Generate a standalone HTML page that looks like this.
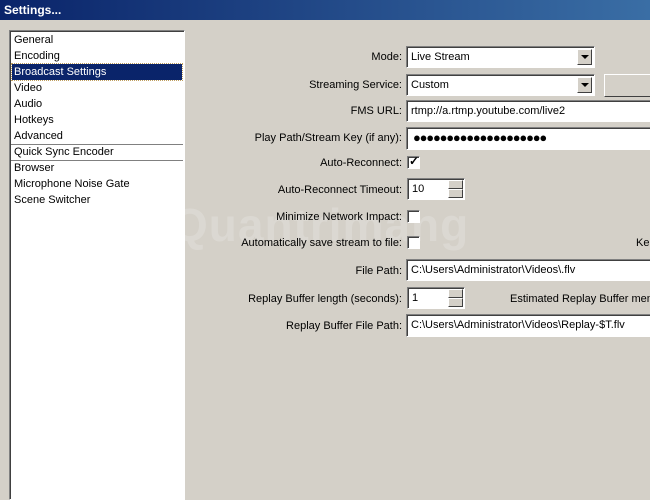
<!DOCTYPE html><html><head><style>
body{margin:0;width:650px;height:500px;background:#d4d0c8;font:11px "Liberation Sans",sans-serif;position:relative;overflow:hidden;color:#000}
.a{position:absolute}
.t{left:0;top:0;width:650px;height:20px;background:linear-gradient(90deg,#0a246a,#3a6ea5);color:#fff;font-weight:bold;font-size:12px;line-height:20px;padding-left:4px;box-sizing:border-box}
.list{left:9px;top:30px;width:176px;height:470px;background:#fff;border:1px solid;border-color:#808080 #fff #fff #808080;box-shadow:inset 1px 1px 0 #404040;box-sizing:border-box}
.it{position:absolute;left:4px;height:16px;line-height:16px;white-space:nowrap}
.sel{left:2px;width:170px;background:#0a246a;color:#fff;padding-left:2px;outline:1px dotted #c0a060;box-sizing:border-box}
.hr{position:absolute;left:1px;right:1px;height:1px;background:#808080}
.lb{position:absolute;right:248px;text-align:right;white-space:nowrap}
.in{position:absolute;background:#fff;border:1px solid;border-color:#808080 #fff #fff #808080;box-shadow:inset 1px 1px 0 #404040;box-sizing:border-box;padding-left:4px;white-space:nowrap;line-height:20px;overflow:hidden}
.dd{position:absolute;right:2px;top:2px;width:15px;height:16px;background:#d4d0c8;border:1px solid;border-color:#fff #404040 #404040 #fff;box-sizing:border-box}
.dd:after{content:"";position:absolute;left:3px;top:5px;border:4px solid transparent;border-top:4px solid #000;border-bottom:0}
.cb{position:absolute;width:13px;height:13px;background:#fff;border:1px solid;border-color:#808080 #fff #fff #808080;box-shadow:inset 1px 1px 0 #404040;box-sizing:border-box}
.sp{position:absolute;right:1px;width:15px;height:9px;background:#d4d0c8;border:1px solid;border-color:#fff #404040 #404040 #fff;box-sizing:border-box}
</style></head><body>
<div class="a t">Settings...</div>
<div class="a list">
<div class="it" style="top:1px">General</div>
<div class="it" style="top:17px">Encoding</div>
<div class="it sel" style="top:33px">Broadcast Settings</div>
<div class="it" style="top:49px">Video</div>
<div class="it" style="top:65px">Audio</div>
<div class="it" style="top:81px">Hotkeys</div>
<div class="it" style="top:97px">Advanced</div>
<div class="hr" style="top:113px"></div>
<div class="it" style="top:113px">Quick Sync Encoder</div>
<div class="hr" style="top:129px"></div>
<div class="it" style="top:129px">Browser</div>
<div class="it" style="top:145px">Microphone Noise Gate</div>
<div class="it" style="top:161px">Scene Switcher</div>
</div>
<div class="a" style="left:172px;top:198px;font-size:46px;color:rgba(255,255,255,.18);font-weight:bold;letter-spacing:1px">Quantrimang</div>
<div class="lb" style="top:51px">Mode:</div>
<div class="in" style="left:406px;top:46px;width:189px;height:22px">Live Stream<div class="dd"></div></div>
<div class="lb" style="top:79px">Streaming Service:</div>
<div class="in" style="left:406px;top:74px;width:189px;height:22px">Custom<div class="dd"></div></div>
<div class="a" style="left:604px;top:74px;width:46px;height:23px;border:1px solid;border-color:#fff #404040 #404040 #fff;border-right:0;box-sizing:border-box"></div>
<div class="lb" style="top:105px">FMS URL:</div>
<div class="in" style="left:406px;top:100px;width:244px;height:22px;border-right:0">rtmp://a.rtmp.youtube.com/live2</div>
<div class="lb" style="top:132px">Play Path/Stream Key (if any):</div>
<div class="in" style="left:406px;top:127px;width:244px;height:23px;font-size:13px;letter-spacing:-1.2px;padding-left:6px;border-right:0">●●●●●●●●●●●●●●●●●●●●</div>
<div class="lb" style="top:157px">Auto-Reconnect:</div>
<div class="cb" style="left:407px;top:156px"><span style="position:absolute;left:1px;top:-3px;font-size:12px;font-weight:bold">✓</span></div>
<div class="lb" style="top:184px">Auto-Reconnect Timeout:</div>
<div class="in" style="left:407px;top:178px;width:58px;height:22px">10<div class="sp" style="top:1px"></div><div class="sp" style="top:10px"></div></div>
<div class="lb" style="top:211px">Minimize Network Impact:</div>
<div class="cb" style="left:407px;top:210px"></div>
<div class="lb" style="top:237px">Automatically save stream to file:</div>
<div class="cb" style="left:407px;top:236px"></div>
<div class="a" style="left:636px;top:237px">Kee</div>
<div class="lb" style="top:265px">File Path:</div>
<div class="in" style="left:406px;top:259px;width:244px;height:22px;border-right:0">C:\Users\Administrator\Videos\.flv</div>
<div class="lb" style="top:293px">Replay Buffer length (seconds):</div>
<div class="in" style="left:407px;top:287px;width:58px;height:22px">1<div class="sp" style="top:1px"></div><div class="sp" style="top:10px"></div></div>
<div class="a" style="left:510px;top:293px;white-space:nowrap">Estimated Replay Buffer memory</div>
<div class="lb" style="top:320px">Replay Buffer File Path:</div>
<div class="in" style="left:406px;top:314px;width:244px;height:23px;border-right:0">C:\Users\Administrator\Videos\Replay-$T.flv</div>
</body></html>
